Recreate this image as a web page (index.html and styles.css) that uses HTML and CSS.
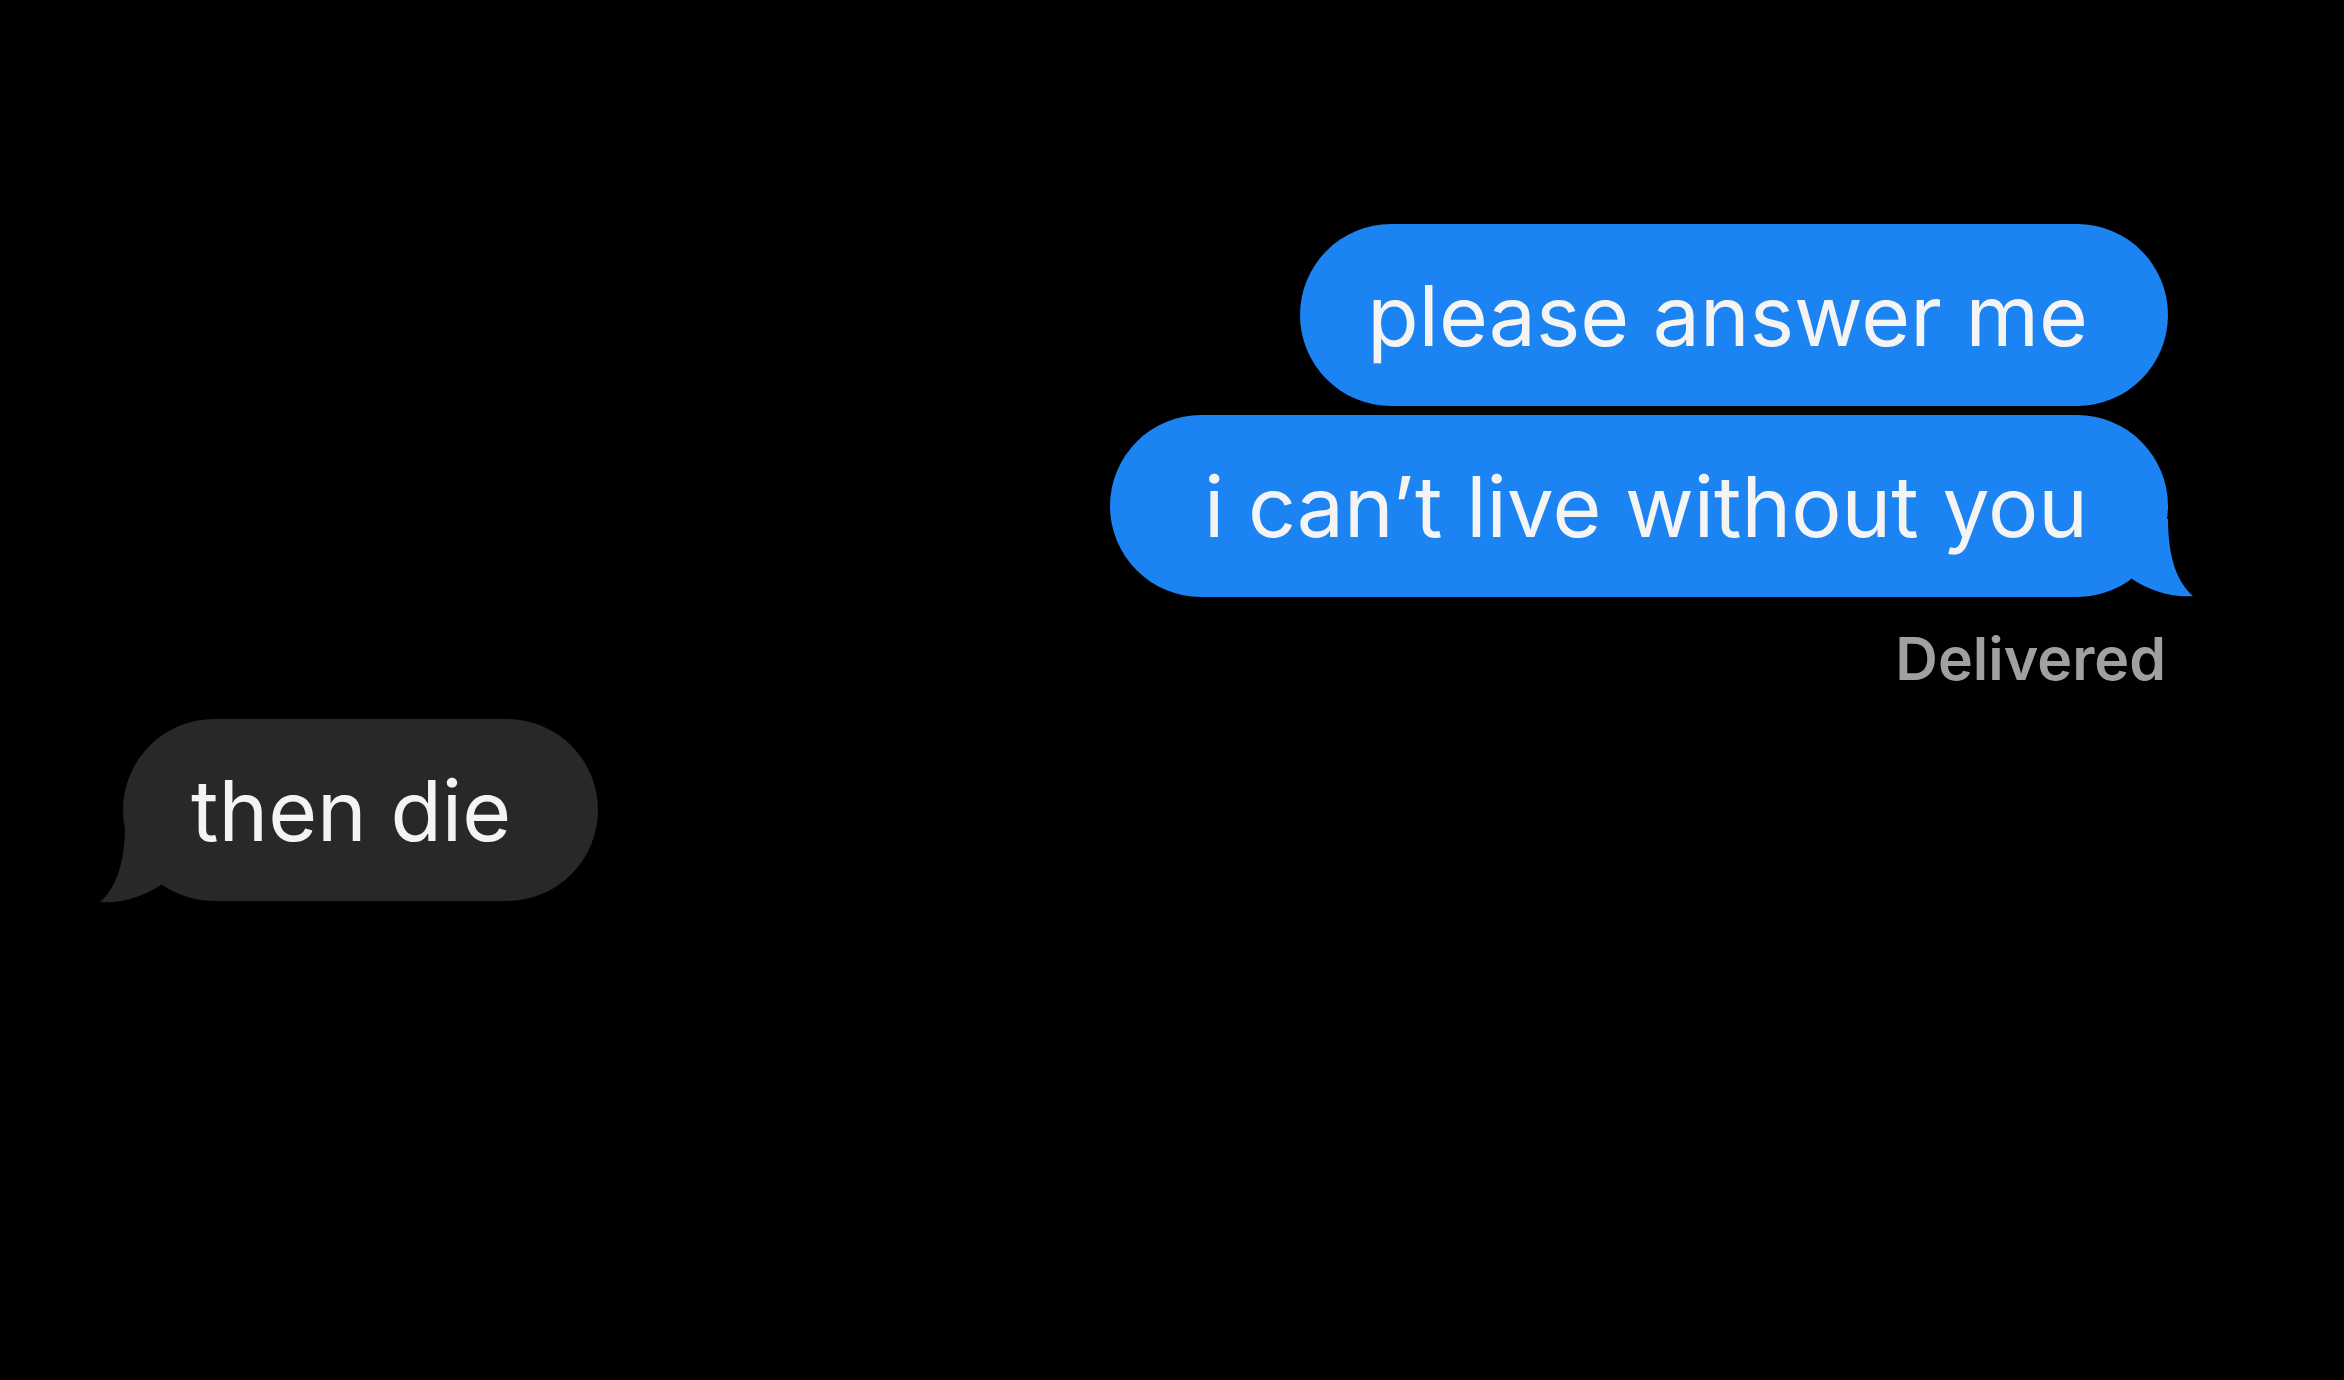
FILE: index.html
```html
<!DOCTYPE html>
<html lang="en">

<head>
    <meta charset="UTF-8">
    <meta name="viewport" content="width=device-width, initial-scale=1.0">
    <title>Messages</title>
    <link rel="stylesheet" href="styles.css">
</head>

<body>
    <div class="chat">
        <div class="group outgoing">
            <div class="bubble sent">please answer me</div>
            <div class="bubble sent last">
                i can’t live without you
                <svg class="tail" viewBox="0 0 75 80" width="75" height="80">
                    <path d="M48 0 C48 40 58 64 73 77 C52 79 28 71 12 60 L12 0 Z" />
                </svg>
            </div>
            <div class="status">Delivered</div>
        </div>

        <div class="group incoming">
            <div class="bubble received last">
                then die
                <svg class="tail" viewBox="0 0 75 80" width="75" height="80">
                    <path d="M48 0 C48 40 58 64 73 77 C52 79 28 71 12 60 L12 0 Z" />
                </svg>
            </div>
        </div>
    </div>
</body>

</html>
```

FILE: styles.css
```css
body {
    margin: 0;
    background-color: #000;
    font-family: Inter, "Noto Sans", sans-serif;
    color: #f4f4f4;
}

.chat {
    height: 1380px;
    padding-top: 224px;
    box-sizing: border-box;
}

.group {
    display: flex;
    flex-direction: column;
}

.outgoing {
    align-items: flex-end;
    gap: 9px;
    padding-right: 176px;
}

.incoming {
    align-items: flex-start;
    padding-left: 123px;
    margin-top: 31px;
}

.bubble {
    position: relative;
    display: flex;
    align-items: center;
    height: 182px;
    padding: 0 80px 0 67px;
    border-radius: 91px;
    font-size: 84px;
    white-space: nowrap;
}

.sent {
    background-color: #1b84f2;
}

.sent.last {
    padding-left: 94px;
}

.received {
    background-color: #262829;
    padding: 0 87px 0 68px;
}

/* little hook under the last bubble of a group */
.tail {
    position: absolute;
    right: -27px;
    bottom: -2px;
}

.sent .tail path {
    fill: #1b84f2;
}

.received .tail {
    right: auto;
    left: -25px;
    bottom: -4px;
    transform: scaleX(-1);
}

.received .tail path {
    fill: #262829;
}

.status {
    margin-top: 23px;
    margin-right: 2px;
    font-size: 59px;
    font-weight: 600;
    line-height: 1;
    color: #a0a0a0;
}
```
